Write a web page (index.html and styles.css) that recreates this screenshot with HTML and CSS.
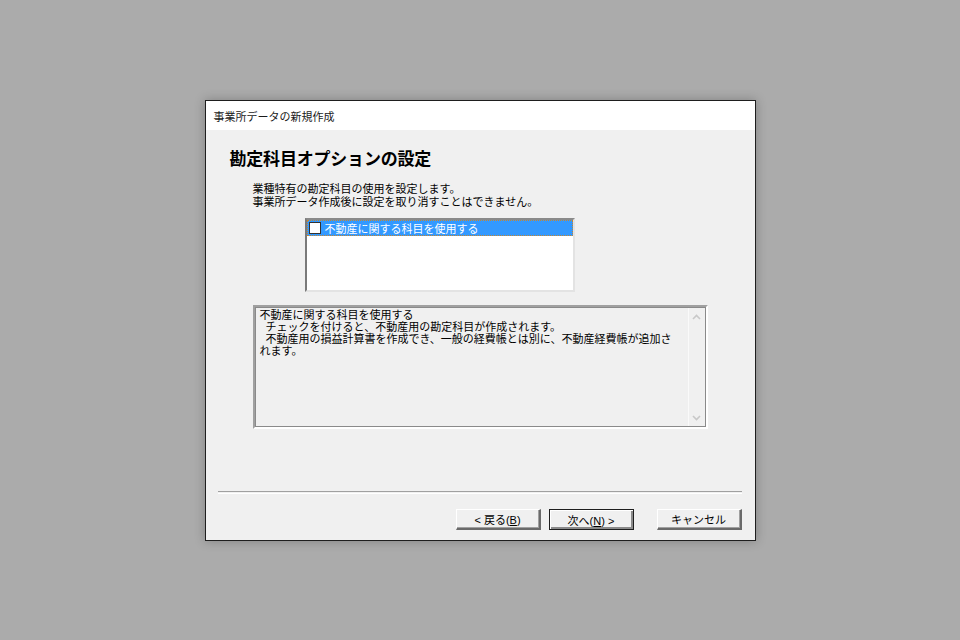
FILE: index.html
```html
<!DOCTYPE html>
<html lang="ja">
<head>
<meta charset="utf-8">
<link rel="stylesheet" href="styles.css">
</head>
<body>
<div class="dialog">
  <div class="titlebar">事業所データの新規作成</div>
  <div class="content">
    <h1 class="heading">勘定科目オプションの設定</h1>
    <div class="intro">
      <div>業種特有の勘定科目の使用を設定します。</div>
      <div>事業所データ作成後に設定を取り消すことはできません。</div>
    </div>
    <div class="listbox">
      <div class="row selected"><span class="check"></span><span class="label">不動産に関する科目を使用する</span></div>
    </div>
    <div class="desc">
      <div class="desc-text">
        <div class="line">不動産に関する科目を使用する</div>
        <div class="line">&nbsp;&nbsp;チェックを付けると、不動産用の勘定科目が作成されます。</div>
        <div class="line">&nbsp;&nbsp;不動産用の損益計算書を作成でき、一般の経費帳とは別に、不動産経費帳が追加さ</div>
        <div class="line">れます。</div>
      </div>
      <div class="scrollbar">
        <svg class="arrow" width="9" height="6" viewBox="0 0 9 6"><path d="M1 5 L4.5 1.5 L8 5" fill="none" stroke="#c8c8c8" stroke-width="1.6"/></svg>
        <svg class="arrow" width="9" height="6" viewBox="0 0 9 6"><path d="M1 1 L4.5 4.5 L8 1" fill="none" stroke="#c8c8c8" stroke-width="1.6"/></svg>
      </div>
    </div>
    <div class="separator"></div>
    <div class="buttons">
      <button class="btn">&lt; 戻る(<u>B</u>)</button>
      <button class="btn default">次へ(<u>N</u>) &gt;</button>
      <button class="btn cancel">キャンセル</button>
    </div>
  </div>
</div>
</body>
</html>
```
FILE: styles.css
```css
html, body {
  margin: 0;
  padding: 0;
  height: 100%;
}
body {
  background: #ababab;
  display: flex;
  align-items: center;
  justify-content: center;
  font-family: "Liberation Sans", "Noto Sans CJK JP", sans-serif;
  color: #000;
}
.dialog {
  width: 551px;
  height: 441px;
  box-sizing: border-box;
  border: 1px solid #1e1e1e;
  background: #f0f0f0;
  display: flex;
  flex-direction: column;
  box-shadow: 0 0 10px rgba(0, 0, 0, 0.25);
  margin-top: 1px;
}
.titlebar {
  height: 29px;
  flex: none;
  background: #fff;
  padding-left: 8px;
  display: flex;
  align-items: center;
  font-size: 11px;
  color: #1a1a1a;
}
.content {
  flex: 1;
  display: flex;
  flex-direction: column;
}
.heading {
  margin: 19px 0 0 24px;
  font-size: 17px;
  line-height: 22px;
  font-weight: bold;
  letter-spacing: -0.2px;
}
.intro {
  margin: 12px 0 0 47px;
  font-size: 11px;
  line-height: 13px;
}
.listbox {
  margin: 9px 0 0 99px;
  width: 270px;
  height: 74px;
  box-sizing: border-box;
  background: #fff;
  border-top: 2px solid #8a8a8a;
  border-left: 2px solid #7a7a7a;
  border-right: 2px solid #e3e3e3;
  border-bottom: 2px solid #e3e3e3;
}
.row {
  height: 16px;
  display: flex;
  align-items: center;
  font-size: 11px;
  box-sizing: border-box;
}
.row.selected {
  background: #3399ff;
  color: #fff;
  outline: 1px dotted #c8862e;
  outline-offset: -1px;
}
.check {
  width: 10px;
  height: 10px;
  background: #fff;
  border: 1px solid #333;
  margin: 0 4px 0 2px;
  flex: none;
}
.desc {
  margin: 13px 0 0 47px;
  width: 455px;
  height: 124px;
  box-sizing: border-box;
  border-top: 2px solid #a0a0a0;
  border-left: 2px solid #a0a0a0;
  border-right: 2px solid #fff;
  border-bottom: 2px solid #fff;
  outline: 1px solid #8a8a8a;
  outline-offset: -3px;
  display: flex;
  background: #f0f0f0;
}
.desc-text {
  flex: 1;
  padding: 2px 0 0 5px;
  font-size: 11px;
  white-space: nowrap;
  overflow: hidden;
}
.line {
  height: 12px;
  line-height: 12px;
}
.scrollbar {
  width: 17px;
  flex: none;
  border-left: 1px solid #fafafa;
  margin: 1px 1px 1px 0;
  display: flex;
  flex-direction: column;
  justify-content: space-between;
  align-items: center;
  padding: 6px 0 5px;
  box-sizing: border-box;
}
.separator {
  margin: 62px 0 0 12px;
  width: 524px;
  height: 1px;
  border-top: 1px solid #a0a0a0;
  border-bottom: 1px solid #fff;
}
.buttons {
  margin: 15px 0 0 250px;
  display: flex;
}
.btn {
  width: 85px;
  height: 21px;
  box-sizing: border-box;
  padding: 0;
  background: #f0f0f0;
  font-family: "Liberation Sans", "Noto Sans CJK JP", sans-serif;
  font-size: 11px;
  color: #000;
  border-top: 1px solid #fff;
  border-left: 1px solid #fff;
  border-right: 2px solid #6a6a6a;
  border-bottom: 2px solid #6a6a6a;
  box-shadow: inset -1px -1px 0 #a0a0a0;
}
.btn.default {
  margin-left: 8px;
  border: 1px solid #1e1e1e;
  box-shadow: inset 1px 1px 0 #fff, inset -2px -2px 0 #8a8a8a;
}
.btn.cancel {
  margin-left: 23px;
}
```
